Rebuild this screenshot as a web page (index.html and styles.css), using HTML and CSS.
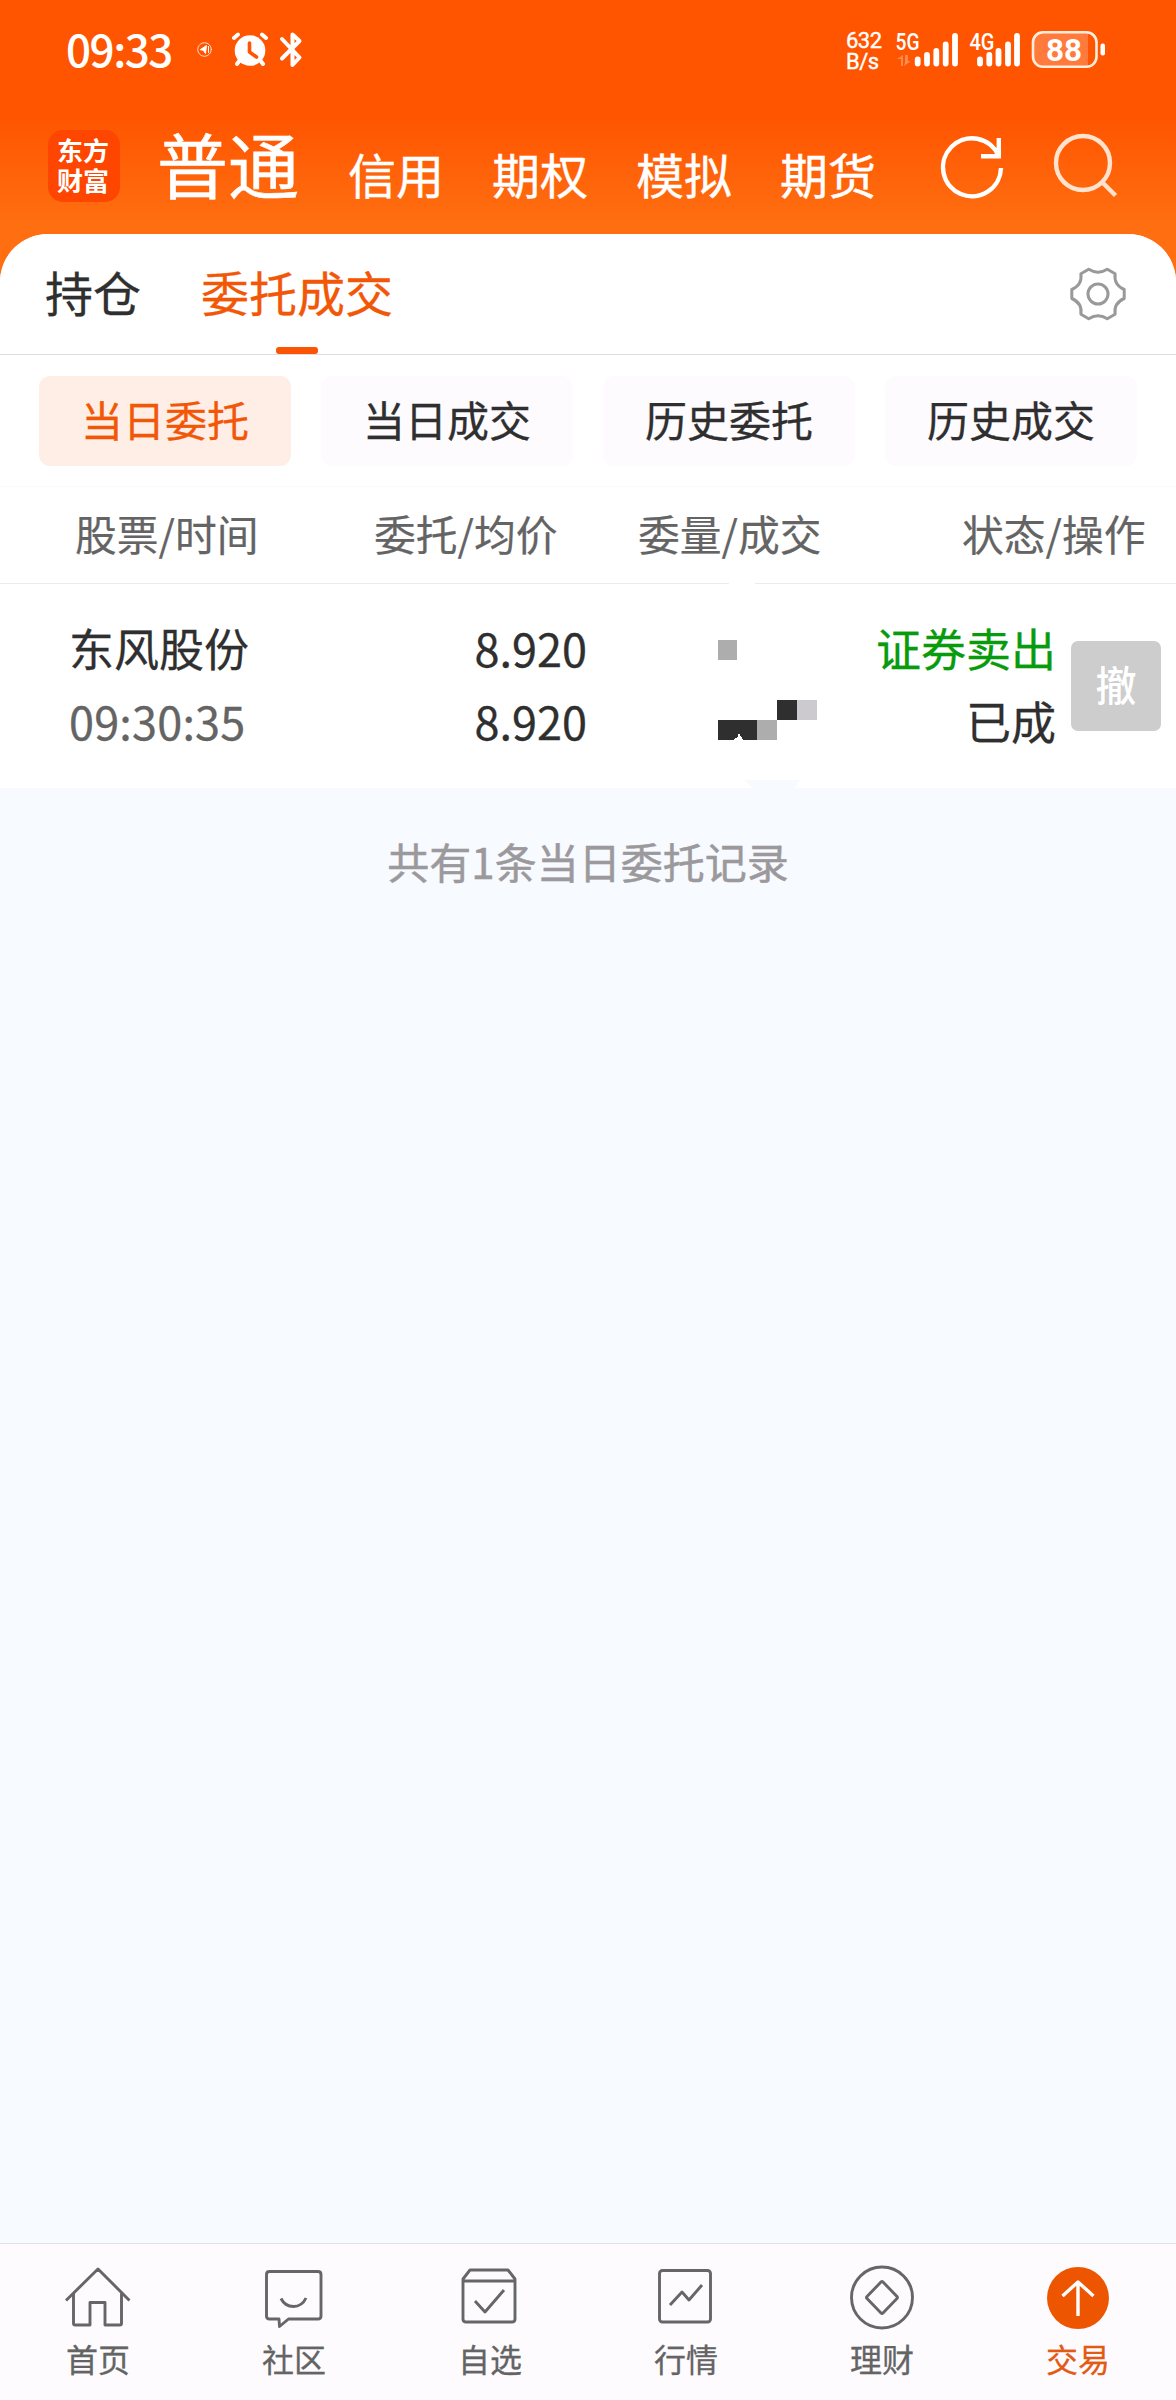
FILE: index.html
```html
<!DOCTYPE html>
<html lang="zh-CN">
<head>
<meta charset="utf-8">
<title>委托成交</title>
<link rel="stylesheet" href="styles.css">
</head>
<body>
<div class="app">
  <header class="top">
    <div class="status">
      <span class="clock">09:33</span>
      <svg class="st-left" width="110" height="44" viewBox="195 28 110 44" fill="none" stroke="#fff" stroke-linecap="round" stroke-linejoin="round">
        <circle cx="204.500" cy="49.500" r="6.800" stroke-width="1" stroke="#ffd9c2"/>
        <path d="M200.500 49.500l6-4-1 8-2-3zM208.500 46.500v6" stroke-width="1" fill="#fff"/>
        <circle cx="250" cy="50.500" r="15.300" fill="#fff" stroke="none"/>
        <path d="M234 38l4-3.500M266 38l-4-3.500M240 60l-3 4M260 60l3 4" stroke-width="4"/>
        <path d="M249.500 43v9l7 5" stroke="#ff5500" stroke-width="3.600"/>
        <path d="M282 39l17.500 18.500-7 7.500V34.500l7 6.500L282 58.500" stroke-width="4"/>
      </svg>
      <span class="speed">632<br>B/s</span>
      <svg class="st-right" width="216" height="44" viewBox="892 28 216 44">
        <g class="net"><text x="895.500" y="50" textLength="24" lengthAdjust="spacingAndGlyphs">5G</text><text x="969.500" y="50" textLength="25" lengthAdjust="spacingAndGlyphs">4G</text></g>
        <path d="M901 66v-7h-4l6-4v11zM905 55v7l-1 4 7-5h-3v-6z" fill="#ff8a4d"/>
        <g stroke="#fff" stroke-width="5.800" stroke-linecap="round">
          <path d="M917.700 59.500v4M927 55v8.500M936.300 51v12.500M945.700 44.500v19M955 36v27.500"/>
          <path d="M980 59.500v4M989.300 55v8.500M998.500 51v12.500M1008 44.500v19M1017 36v27.500"/>
        </g>
        <path d="M1043 32.500h45v34h-45a10 10 0 0 1-10-10v-14a10 10 0 0 1 10-10z" fill="#ff7a3b"/>
        <rect x="1033" y="32.300" width="63.500" height="34.500" rx="10" fill="none" stroke="#ffeedd" stroke-width="2.600"/>
        <rect x="1100.500" y="43.500" width="4.500" height="12" rx="2" fill="#fff"/>
        <text class="battery" x="1046" y="61" textLength="36" lengthAdjust="spacingAndGlyphs">88</text>
      </svg>
    </div>
    <div class="nav">
      <div class="logo"><span>东方</span><span>财富</span></div>
      <strong class="mode">普通</strong>
      <nav class="modes"><span>信用</span><span>期权</span><span>模拟</span><span>期货</span></nav>
      <svg class="actions" width="186" height="72" viewBox="936 130 186 72" fill="none">
        <path d="M1001 168A29 29 0 1 1 998.500 155.500M998.800 138v18.300H981" stroke="#fff" stroke-width="4.400"/>
        <g stroke="#ffe3cf" stroke-width="4.400"><circle cx="1083" cy="163" r="27"/><path d="M1102 182l13.500 13.500"/></g>
      </svg>
    </div>
  </header>

  <main class="panel">
    <div class="tabs">
      <span class="tab">持仓</span>
      <span class="tab active">委托成交</span>
      <svg class="gear" width="60" height="60" viewBox="0 0 60 60" fill="none" stroke="#9a989b" stroke-width="3" stroke-linejoin="round">
        <path d="M39.300 5.300Q30 11 20.700 5.300L12.900 9.800Q14.400 21 3.800 25.500V34.500Q14.400 39 12.900 50.200L20.700 54.700Q30 49 39.300 54.700L47.100 50.200Q45.600 39 56.200 34.500V25.500Q45.600 21 47.100 9.800Z"/>
        <circle cx="30" cy="30" r="10"/>
      </svg>
    </div>
    <div class="chips">
      <span class="chip on">当日委托</span><span class="chip">当日成交</span><span class="chip">历史委托</span><span class="chip">历史成交</span>
    </div>
    <div class="cols"><span>股票/时间</span><span>委托/均价</span><span>委量/成交</span><span>状态/操作</span></div>
    <div class="order">
      <div class="cell name">东风股份<br><span class="time">09:30:35</span></div>
      <div class="cell price">8.920<br>8.920</div>
      <svg class="mosaic" width="110" height="206" viewBox="710 582 110 206" shape-rendering="crispEdges">
        <path d="M729 582h26v3h-26z" fill="#fff"/>
        <path d="M718 640h19v20h-19zM757 720h20v20h-20z" fill="#adadad"/>
        <path d="M718 720h39v20h-39zM777 700h20v20h-20z" fill="#2f2f2f"/>
        <path d="M797 700h20v20h-20z" fill="#cccace"/>
        <path d="M733 740l3-2 1 1 2-6 4 7z" fill="#fff"/>
        <path d="M745 780h55l-6 8h-42z" fill="#f7faff"/>
      </svg>
      <div class="cell state"><span class="sell">证券卖出</span><br>已成</div>
      <span class="cancel">撤</span>
    </div>
    <div class="summary">共有1条当日委托记录</div>
  </main>

  <footer class="bar">
    <div class="item">
      <svg class="ico" viewBox="0 0 68 68"><path d="M2 36.500L34 5l31.500 31.500M9.500 29.500v29.700q0 1.800 1.800 1.800H26V38.500h15V61h14.700q1.800 0 1.800-1.800V29.500"/></svg>
      <span>首页</span>
    </div>
    <div class="item">
      <svg class="ico" viewBox="0 0 68 68"><path d="M9.500 7.500h48.500q3 0 3 3V52q0 3-3 3H28.500l-9 7.500-.5-7.500H9.500q-3 0-3-3V10.500q0-3 3-3zM21 34.500q4 8 12.500 8T46 34"/></svg>
      <span>社区</span>
    </div>
    <div class="item">
      <svg class="ico" viewBox="0 0 68 68"><path d="M7 15l7-9h38l7 9v40q0 3-3 3H10q-3 0-3-3zM7 17h52M19 37l10 11 19-22"/></svg>
      <span>自选</span>
    </div>
    <div class="item">
      <svg class="ico" viewBox="0 0 68 68"><rect x="7.500" y="6.500" width="51" height="51.500" rx="3"/><path d="M18 41l12-13 7 8 13-15"/></svg>
      <span>行情</span>
    </div>
    <div class="item">
      <svg class="ico" viewBox="0 0 68 68"><circle cx="34" cy="33.500" r="30.500"/><path d="M33 18q1-1 2 0L49 32.500q1 1 0 2L35 49q-1 1-2 0L19 34.500q-1-1 0-2z"/></svg>
      <span>理财</span>
    </div>
    <div class="item current">
      <svg class="ico" viewBox="0 0 68 68"><circle cx="34" cy="34" r="31" fill="#ed5500" stroke="none"/><path d="M34 52V18M18.500 32L34 18l15.500 14" stroke="#fff" stroke-width="3.400"/></svg>
      <span>交易</span>
    </div>
  </footer>
</div>
</body>
</html>
```
FILE: styles.css
```css
* { box-sizing: border-box; }
body { margin: 0; font-family: "Noto Sans CJK SC", sans-serif; color: #2f2f2f; }
svg { display: block; flex: none; }
.app { width: 1176px; height: 2400px; display: flex; flex-direction: column; background: #f7faff; }

.top { height: 290px; flex: none; color: #fff; background: linear-gradient(#ff5500 0, #ff5500 118px, #ff6f12 225px, #ff6f12 100%); }
.status { height: 100px; display: flex; align-items: flex-start; padding: 28px 68px 0 66px; }
.clock { width: 129px; font-size: 44px; line-height: 40px; font-weight: 500; letter-spacing: -1.5px; }
.speed { margin-left: 541px; width: 46px; padding-top: 2px; font: 400 22px/21px Roboto, sans-serif; letter-spacing: -.5px; -webkit-text-stroke: .4px #fff; }
.net { font: 500 24px Roboto, sans-serif; fill: #fff; }
.battery { font: 700 32px Roboto, sans-serif; fill: #fff; }

.nav { height: 134px; display: flex; align-items: flex-start; padding: 30px 54px 0 48px; }
.logo { width: 72px; height: 72px; display: flex; flex-direction: column; padding: 5px 0 0 9px; border-radius: 15px; background: #ff4600; font-size: 26px; line-height: 30px; font-weight: 700; }
.mode { margin-left: 37px; width: 191px; font-size: 71px; line-height: 64px; font-weight: 400; -webkit-text-stroke: .6px #fff; }
.modes { display: flex; gap: 48px; width: 588px; font-size: 48px; line-height: 48px; padding-top: 19px; -webkit-text-stroke: .4px #fff; }

.panel { margin-top: -56px; flex: 1; background: #f7faff; border-radius: 48px 48px 0 0; }
.tabs { height: 121px; display: flex; align-items: center; gap: 60px; padding: 0 48px 4px 45px; background: #fff; border-bottom: 1px solid #dedede; border-radius: 48px 48px 0 0; }
.tab { position: relative; top: -1px; font-size: 48px; line-height: 60px; -webkit-text-stroke: .3px; }
.active { color: #f25708; }
.active::after { content: ""; position: absolute; left: 75px; bottom: -33px; width: 42px; height: 7px; border-radius: 3px; background: #fa5504; }
.gear { margin: 4px 0 0 auto; }
.chips { height: 131px; display: flex; gap: 30px; padding: 21px 39px 0; background: #fff; }
.chip { flex: 1; height: 90px; border-radius: 11px; background: #fefbff; text-align: center; font-size: 42px; line-height: 86px; -webkit-text-stroke: .3px; }
.on { background: #ffeee6; color: #f25708; }
.cols { height: 98px; display: grid; grid-template-columns: 299px 264px 324px 1fr; padding-left: 75px; background: #fff; border-top: 1px solid #fafafa; border-bottom: 1px solid #ececec; color: #646464; font-size: 41.800px; line-height: 92px; -webkit-text-stroke: .2px; }
.order { height: 204px; display: grid; grid-template-columns: 301px 217px 124px 110px 235px 90px; align-items: start; padding-left: 69px; background: #fff; font-size: 45px; line-height: 73px; }
.cell { padding-top: 27px; white-space: nowrap; -webkit-text-stroke: .3px; }
.time { color: #646464; letter-spacing: .2px; }
.price { text-align: right; }
.mosaic { grid-column: 4; margin: -2px 0 0 -1px; }
.order .state { text-align: right; }
.sell { color: #089b0c; }
.cancel { margin: 57px 0 0 15px; width: 90px; height: 90px; border-radius: 7px; background: #cdcdcd; color: #fff; font-size: 41px; line-height: 85px; text-align: center; font-weight: 500; }
.summary { padding-top: 43px; text-align: center; font-size: 42px; line-height: 60px; color: #9b999c; -webkit-text-stroke: .5px; }

.bar { height: 157px; flex: none; display: grid; grid-template-columns: repeat(6, 1fr); background: #fefbff; border-top: 1px solid #e2e2e4; }
.item { display: flex; flex-direction: column; align-items: center; padding-top: 20px; color: #646464; font-size: 32px; line-height: 44px; -webkit-text-stroke: .3px; }
.ico { width: 68px; height: 68px; margin-bottom: 4px; fill: none; stroke: #666; stroke-width: 2.900; stroke-linejoin: round; }
.current { color: #e25a14; }
```
